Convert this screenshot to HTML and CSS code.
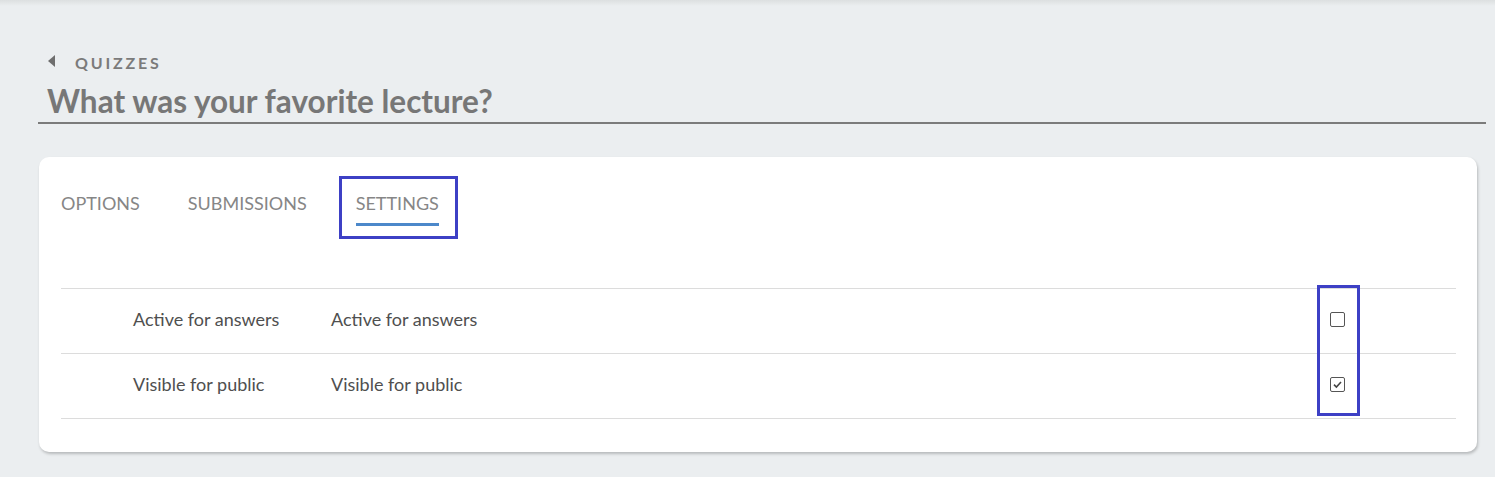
FILE: index.html
```html
<!DOCTYPE html>
<html lang="en">

<head>
    <meta charset="utf-8" />
    <title>What was your favorite lecture?</title>
    <link rel="stylesheet" href="styles.css">
</head>

<body>
    <div class="topShade"></div>
    <div class="page">
        <div class="header">
            <a class="crumb" href="#"><span class="caret"></span>QUIZZES</a>
            <h1>What was your favorite lecture?</h1>
        </div>
        <div class="card">
            <div class="tabs">
                <div class="tab">OPTIONS</div>
                <div class="tab">SUBMISSIONS</div>
                <div class="tabMark">
                    <div class="tab active">SETTINGS</div>
                </div>
            </div>
            <div class="table">
                <div class="row">
                    <div class="name">Active for answers</div>
                    <div class="label">Active for answers</div>
                    <div class="check"><span class="box"></span></div>
                </div>
                <div class="row">
                    <div class="name">Visible for public</div>
                    <div class="label">Visible for public</div>
                    <div class="check">
                        <span class="box">
                            <svg width="11" height="11" viewBox="0 0 11 11">
                                <path d="M2 5.6 L4.4 8 L9 3" fill="none" stroke="#444" stroke-width="1.6" />
                            </svg>
                        </span>
                    </div>
                </div>
                <div class="colMark"></div>
            </div>
        </div>
    </div>
</body>

</html>
```

FILE: styles.css
```css
body {
    margin: 0;
    background: #ebeef0;
    font-family: Lato, 'Open Sans', sans-serif;
}

.topShade {
    height: 6px;
    background: linear-gradient(#dcdfe0, #ebeef0);
}

.page {
    padding: 0 9px 0 38px;
}

.header {
    padding-top: 46px;
    border-bottom: 2px solid #7b7b7b;
}

.crumb {
    display: flex;
    align-items: center;
    height: 20px;
    color: #7b7b7b;
    font-size: 16px;
    font-weight: bold;
    letter-spacing: 2.8px;
    text-decoration: none;
    padding-left: 10px;
}

.caret {
    width: 0;
    height: 0;
    border-top: 6px solid transparent;
    border-bottom: 6px solid transparent;
    border-right: 7px solid #6e6e6e;
    margin-right: 20px;
    margin-top: -3px;
}

h1 {
    margin: 10px 0 2px 9px;
    font-size: 31.5px;
    color: #777;
    line-height: 38px;
}

.card {
    margin: 33px 9px 26px 1px;
    background: #fff;
    border-radius: 10px;
    box-shadow: 1px 2px 3px rgba(0, 0, 0, 0.22);
    padding: 20px 21px 33px 22px;
}

.tabs {
    display: flex;
    align-items: flex-start;
    height: 111px;
}

.tab {
    font-size: 18px;
    color: #868686;
    margin-right: 48px;
    padding-top: 15px;
}

.tabMark {
    margin: -1px 0 0 -16px;
    border: 3px solid #3d40c5;
    padding: 0 16px 0 14px;
    height: 57px;
}

.tab.active {
    margin-right: 0;
    padding-top: 13px;
    padding-bottom: 9px;
    border-bottom: 3px solid #4c88ca;
}

.table {
    position: relative;
    border-top: 1px solid #dcdcdc;
}

.row {
    display: flex;
    align-items: center;
    box-sizing: border-box;
    height: 65px;
    padding-bottom: 4px;
    border-bottom: 1px solid #dcdcdc;
    padding-left: 72px;
    font-size: 18px;
    color: #4f4f4f;
}

.name {
    width: 198px;
}

.label {
    flex: 1;
}

.check {
    margin-right: 111px;
}

.box {
    display: flex;
    align-items: center;
    justify-content: center;
    width: 13px;
    height: 13px;
    border: 1.5px solid #555;
    border-radius: 2px;
}

.colMark {
    position: absolute;
    top: -4px;
    right: 96px;
    width: 37px;
    height: 125px;
    border: 3px solid #3d40c5;
}
```
